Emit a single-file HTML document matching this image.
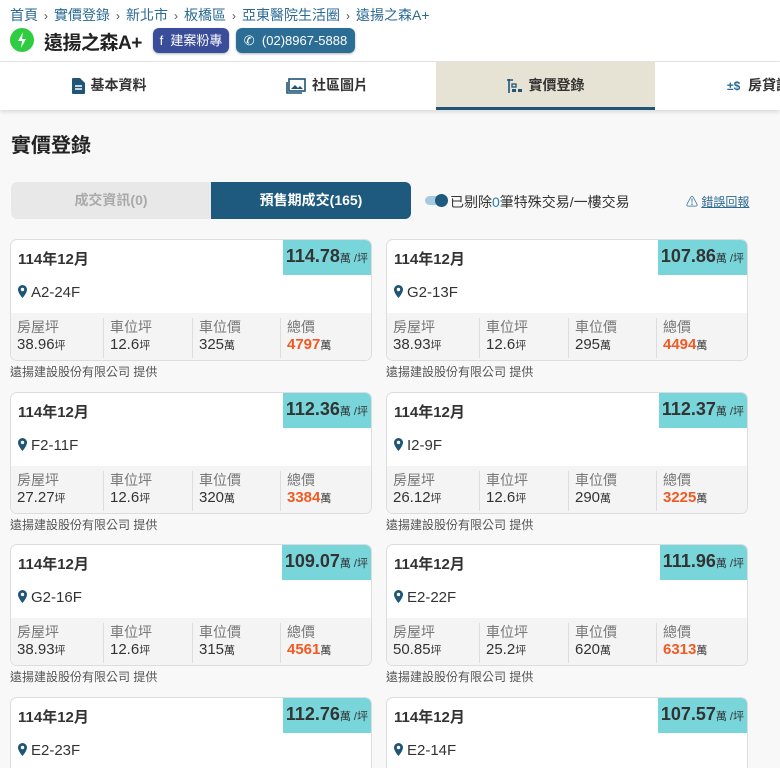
<!DOCTYPE html>
<html><head><meta charset="utf-8"><style>
*{margin:0;padding:0;box-sizing:border-box}
html,body{width:780px;height:768px;overflow:hidden}
body{background:#f8f8f8;font-family:"Liberation Sans","Noto Sans CJK TC",sans-serif;color:#333;position:relative}
#wrap{position:absolute;left:0;top:0;width:780px;height:768px;overflow:hidden}
.top{position:absolute;left:0;top:0;width:780px;height:62px;background:#fff;border-bottom:1px solid #e6e6e6}
.bc{position:absolute;left:10px;top:5px;font-size:14px;color:#2a6a93;white-space:nowrap}
.bc span{color:#555;margin:0 6px;font-size:12px}
.logo{position:absolute;left:10px;top:28px;width:24px;height:24px;border-radius:50%;background:#2ecc40}
.title{position:absolute;left:44px;top:28px;font-size:19px;font-weight:bold;color:#222;letter-spacing:-0.5px}
.btn{position:absolute;top:28px;height:25px;border-radius:6px;color:#fff;font-size:13px;line-height:25px;text-align:center;box-shadow:0 1px 2px rgba(0,0,0,.3)}
.tabs{position:absolute;left:0;top:62px;width:780px;height:48px;background:#fff;box-shadow:0 2px 4px rgba(0,0,0,.12)}
.tab{position:absolute;top:0;height:48px;line-height:46px;font-size:14px;font-weight:bold;color:#333;text-align:center;white-space:nowrap}
.tab svg{vertical-align:-4px;margin-right:6px}
.h1{position:absolute;left:11px;top:129px;font-size:20px;font-weight:bold;color:#222}
.seg{position:absolute;top:182px;height:37px;line-height:37px;text-align:center;font-size:14px;font-weight:bold}
.card{position:absolute;width:362px;height:122px;background:#fff;border:1px solid #ddd;border-radius:7px;overflow:hidden}
.card .d{position:absolute;left:7px;top:8px;font-size:15px;font-weight:bold;color:#333}
.card .p{position:absolute;right:0;top:0;height:35px;background:#78d6db;padding:0 3px;line-height:33px;font-size:18px;font-weight:bold;color:#333}
.card .p small{font-size:11px;font-weight:normal}
.card .l{position:absolute;left:7px;top:44px;font-size:15px;color:#333}
.card .g{position:absolute;left:0;top:73px;width:100%;height:49px;background:#f4f4f4}
.c{position:absolute;top:5px;height:40px;padding-left:6px;font-size:14px;color:#777;line-height:18px}
.c b{display:block;color:#333;font-weight:normal;font-size:15px}
.c b small{font-size:11px}
.c.s{border-left:1px solid #ddd}
.o{color:#f15a22!important;font-weight:bold!important}
.cap{position:absolute;font-size:12px;color:#555}
</style></head><body><div id="wrap">
<div class="top">
<div class="bc">首頁<span>›</span>實價登錄<span>›</span>新北市<span>›</span>板橋區<span>›</span>亞東醫院生活圈<span>›</span>遠揚之森A+</div>
<div class="logo"><svg width="24" height="24" viewBox="0 0 24 24"><path d="M13 4 8 13h4l-1 7 5-9h-4z" fill="#fff"/></svg></div>
<div class="title">遠揚之森A+</div>
<div class="btn" style="left:153px;width:76px;background:#3a4d9a">f&nbsp; 建案粉專</div>
<div class="btn" style="left:236px;width:119px;background:#2c6d95">✆&nbsp; (02)8967-5888</div>
</div>
<div class="tabs">
<div class="tab" style="left:0;width:218px"><svg width="13" height="16" viewBox="0 0 13 16"><path d="M0 1a1 1 0 0 1 1-1h7l5 5v10a1 1 0 0 1-1 1H1a1 1 0 0 1-1-1z" fill="#1f5577"/><path d="M3 8h7M3 11h7" stroke="#fff" stroke-width="1.4"/></svg>基本資料</div>
<div class="tab" style="left:218px;width:218px"><svg width="20" height="16" viewBox="0 0 20 16"><rect x="3" y="1" width="16" height="12" fill="none" stroke="#1f5577" stroke-width="1.6"/><path d="M1 4v11h15" fill="none" stroke="#1f5577" stroke-width="1.6"/><path d="M5 11l4-4 3 3 2-2 3 3z" fill="#1f5577"/></svg>社區圖片</div>
<div class="tab" style="left:436px;width:219px;background:#e7e3d4;border-bottom:3px solid #1f5577"><svg width="16" height="16" viewBox="0 0 16 16"><path d="M2 1v14M0 2h6" stroke="#1f5577" stroke-width="1.6"/><rect x="5" y="6" width="4" height="3" fill="none" stroke="#1f5577" stroke-width="1.3"/><rect x="5" y="11" width="4" height="3" fill="#1f5577"/><rect x="11" y="11" width="4" height="3" fill="#1f5577"/></svg>實價登錄</div>
<div class="tab" style="left:727px;width:53px;text-align:left;color:#333;overflow:hidden"><span style="color:#2a6a93;font-size:12px">±$</span>&nbsp; 房貸試算</div>
</div>
<div class="h1">實價登錄</div>
<div class="seg" style="left:11px;width:200px;background:#e8e8e8;color:#aaa;border-radius:6px 0 0 6px">成交資訊(0)</div>
<div class="seg" style="left:211px;width:200px;background:#1d5a7d;color:#fff;border-radius:0 6px 6px 0">預售期成交(165)</div>
<div style="position:absolute;left:425px;top:196px;width:22px;height:9px;border-radius:5px;background:#a7c9de"></div>
<div style="position:absolute;left:435px;top:194px;width:13px;height:13px;border-radius:50%;background:#1d5a7d"></div>
<div style="position:absolute;left:450px;top:192px;font-size:14px;color:#333">已剔除<span style="color:#2a7ab5">0</span>筆特殊交易/一樓交易</div>
<div style="position:absolute;left:686px;top:193px;font-size:12px;color:#2a6a93">⚠ <u>錯誤回報</u></div>

<div id="cards"></div>
</div>
<script>
var d=[["114.78","A2-24F","38.96","12.6","325","4797"],["107.86","G2-13F","38.93","12.6","295","4494"],
["112.36","F2-11F","27.27","12.6","320","3384"],["112.37","I2-9F","26.12","12.6","290","3225"],
["109.07","G2-16F","38.93","12.6","315","4561"],["111.96","E2-22F","50.85","25.2","620","6313"],
["112.76","E2-23F","","","",""],["107.57","E2-14F","","","",""]];
var h="";
d.forEach(function(r,i){var x=i%2?386:10,y=Math.round(239+Math.floor(i/2)*152.5);
var hh=r[2]?122:(768-y);
h+='<div class="card" style="left:'+x+'px;top:'+y+'px;height:'+hh+'px;'+(r[2]?'':'border-bottom:none;border-radius:7px 7px 0 0')+'"><div class="d">114年12月</div><div class="p">'+r[0]+'<small>萬 /坪</small></div><div class="l"><svg width="9" height="13" viewBox="0 0 9 13" style="vertical-align:-1px;margin-right:4px"><path d="M4.5 0A4.5 4.5 0 0 0 0 4.5C0 8 4.5 13 4.5 13S9 8 9 4.5A4.5 4.5 0 0 0 4.5 0z" fill="#1f5577"/><circle cx="4.5" cy="4.5" r="1.7" fill="#fff"/></svg>'+r[1]+'</div>';
if(r[2])h+='<div class="g"><div class="c" style="left:0">房屋坪<b>'+r[2]+'<small>坪</small></b></div><div class="c s" style="left:92px">車位坪<b>'+r[3]+'<small>坪</small></b></div><div class="c s" style="left:181px">車位價<b>'+r[4]+'<small>萬</small></b></div><div class="c s" style="left:269px">總價<b><span class="o">'+r[5]+'</span><small>萬</small></b></div></div>';
h+='</div>';
if(r[2])h+='<div class="cap" style="left:'+x+'px;top:'+(y+124)+'px">遠揚建設股份有限公司 提供</div>';});
document.getElementById("cards").innerHTML=h;
</script>
</body></html>
